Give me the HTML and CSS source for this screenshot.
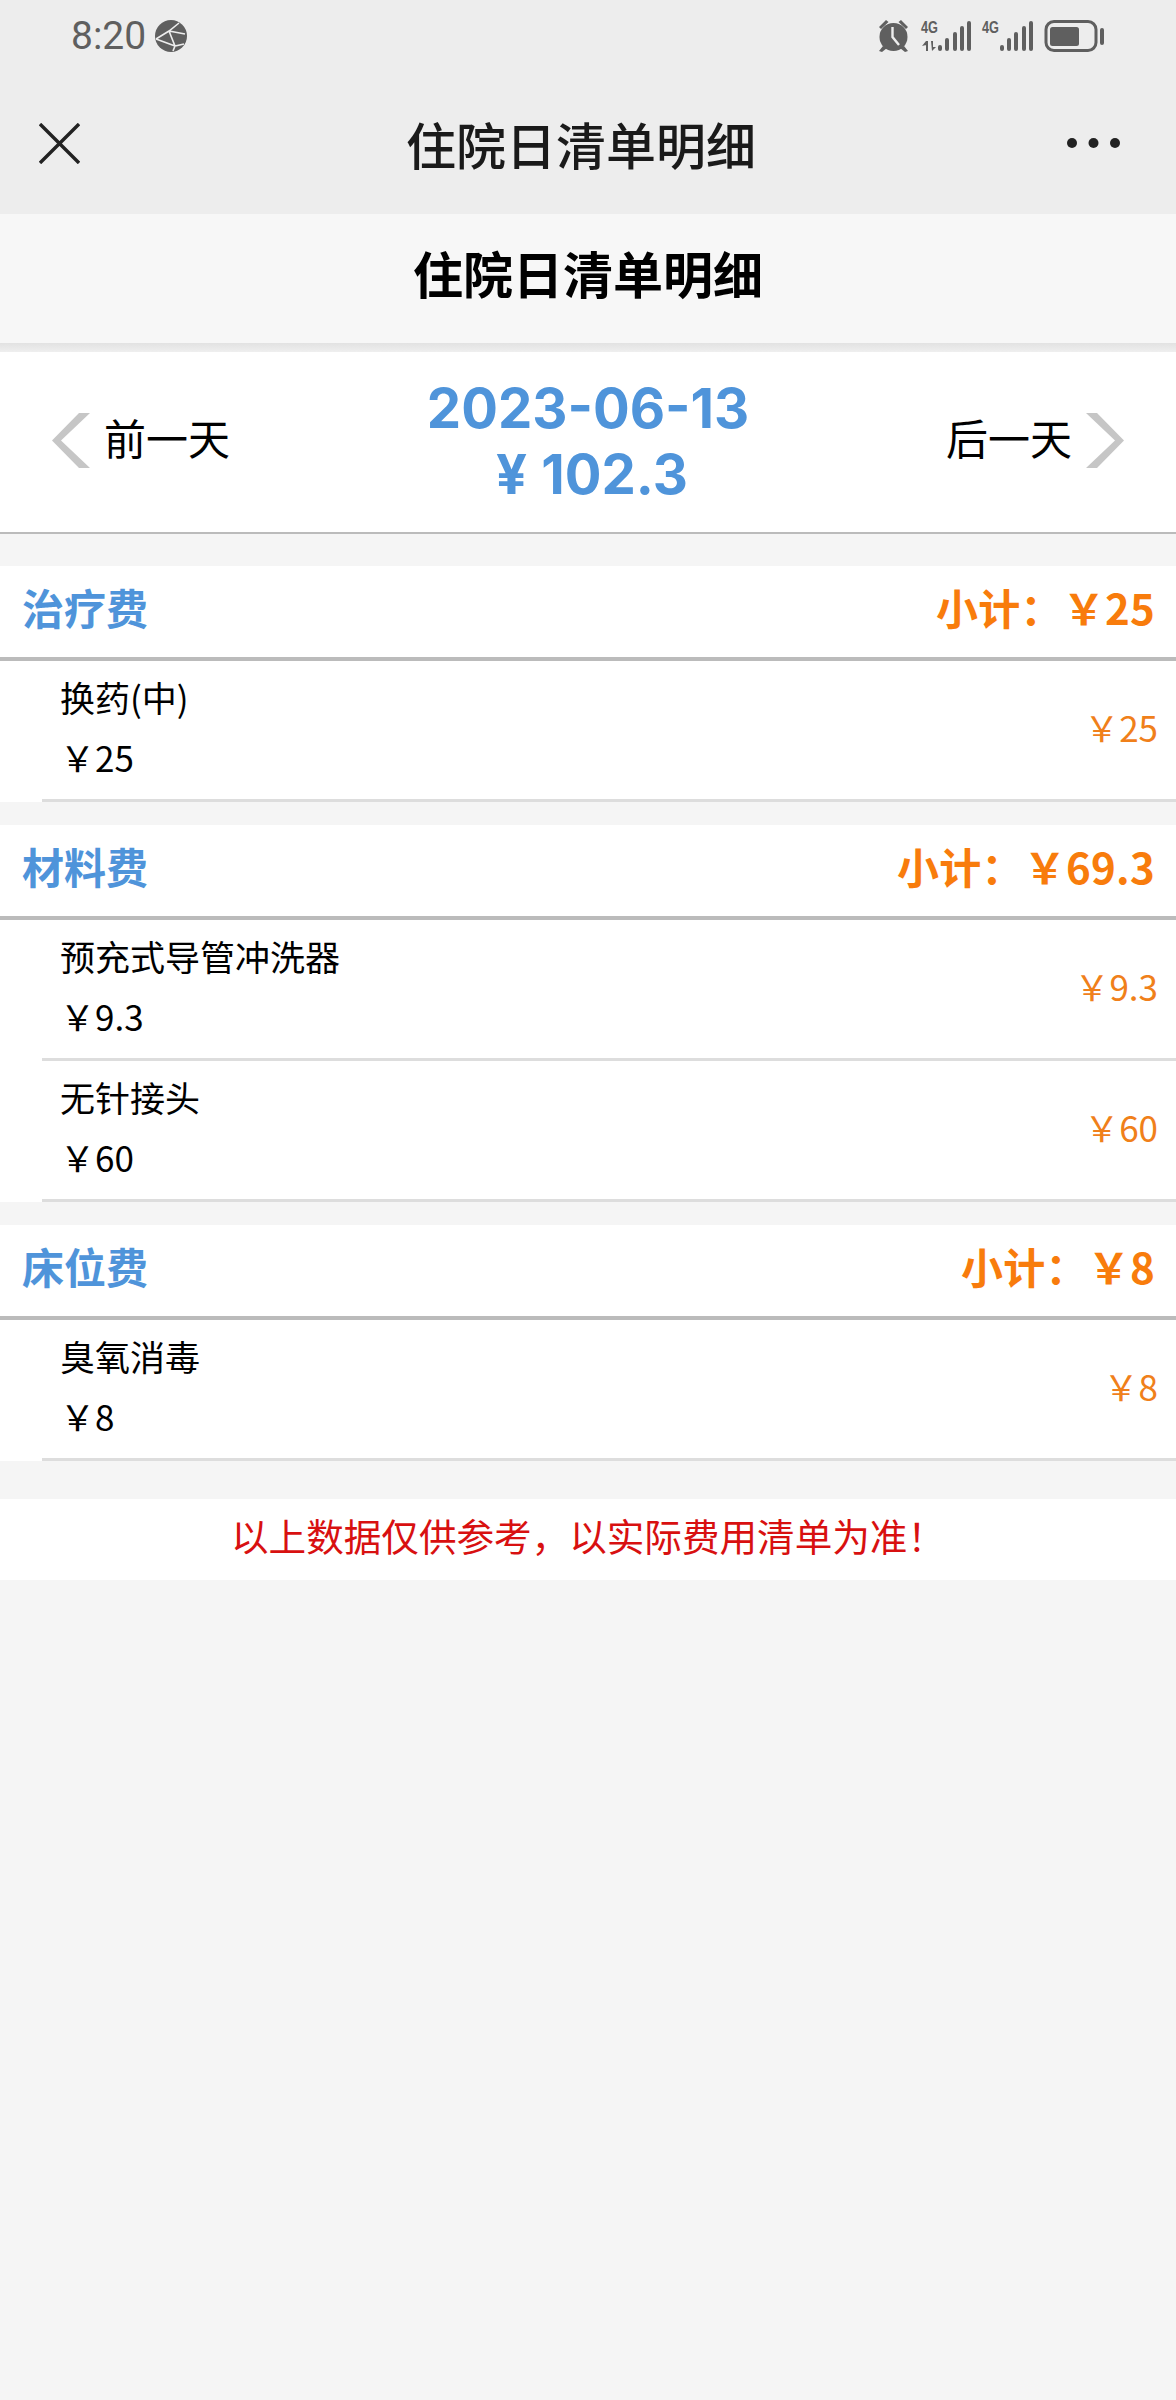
FILE: index.html
```html
<!DOCTYPE html>
<html lang="zh-CN">
<head>
<meta charset="utf-8">
<title>住院日清单明细</title>
<link rel="stylesheet" href="styles.css">
</head>
<body>
<header class="chrome">
  <div class="status">
    <div class="status-left">
      <span class="clock">8:20</span>
      <svg class="globe" width="32" height="32" viewBox="0 0 32 32"><circle cx="16" cy="16" r="16" fill="#5f5f5f"/><path d="M1 19 L14 11 L24 3 M14 11 L30 14 M14 11 L20 26 L29 24 M1 19 L20 26 L18 31" fill="none" stroke="#ededed" stroke-width="1.6"/></svg>
    </div>
    <svg class="status-right" width="234" height="40" viewBox="-2 0 234 40">
      <g fill="#5f5f5f">
        <circle cx="15.500" cy="19" r="14"/>
        <path d="M1 9 L8 2 L10.500 4 L3 11Z M30 9 L23 2 L20.500 4 L28 11Z M5 28 L1 33 L4 34 L9 30Z M26 28 L30 33 L27 34 L22 30Z"/>
      </g>
      <path d="M14.500 9 L14.500 19 L21 27" fill="none" stroke="#ededed" stroke-width="2.400"/>
      <text class="net" x="43" y="15" textLength="17" lengthAdjust="spacingAndGlyphs">4G</text>
      <g fill="#5f5f5f">
        <path d="M48 23 h2 v10 h-2z M44 28 l4-5 v4z M53 23 h2 v6 l3 0 l-4 4z"/>
        <rect x="60" y="27" width="4" height="6" rx="2"/>
        <rect x="67" y="20" width="4" height="13" rx="2"/>
        <rect x="75" y="14" width="4" height="19" rx="2"/>
        <rect x="82" y="8" width="4" height="25" rx="2"/>
        <rect x="89" y="3" width="4" height="30" rx="2"/>
      </g>
      <text class="net" x="104" y="15" textLength="17" lengthAdjust="spacingAndGlyphs">4G</text>
      <g fill="#5f5f5f">
        <rect x="122" y="27" width="4" height="6" rx="2"/>
        <rect x="129" y="20" width="4" height="13" rx="2"/>
        <rect x="136" y="14" width="4" height="19" rx="2"/>
        <rect x="144" y="8" width="4" height="25" rx="2"/>
        <rect x="151" y="3" width="4" height="30" rx="2"/>
      </g>
      <rect x="168" y="3.500" width="50" height="29" rx="8" fill="none" stroke="#5f5f5f" stroke-width="3"/>
      <rect x="172" y="9" width="29" height="19" rx="2.500" fill="#5f5f5f"/>
      <rect x="222" y="10" width="4" height="17" rx="2" fill="#5f5f5f"/>
    </svg>
  </div>
  <nav class="nav">
    <svg class="close" width="41" height="41" viewBox="0 0 41 41"><path d="M1 1 L40 40 M40 1 L1 40" stroke="#222" stroke-width="3.400" fill="none"/></svg>
    <div class="nav-title">住院日清单明细</div>
    <svg class="more" width="53" height="10" viewBox="0 0 53 10"><circle cx="5" cy="5" r="5"/><circle cx="26.500" cy="5" r="5"/><circle cx="48" cy="5" r="5"/></svg>
  </nav>
</header>

<div class="page-title">住院日清单明细</div>
<div class="title-shadow"></div>

<section class="day">
  <div class="day-link">
    <svg class="chev" width="38" height="55" viewBox="0 0 38 55"><path d="M27 0 H38 L9 27.500 L38 55 H27 L0 27.500Z"/></svg>
    <span>前一天</span>
  </div>
  <div class="day-center">
    <div>2023-06-13</div>
    <div class="day-amount"><span class="day-yen">¥</span>102.3</div>
  </div>
  <div class="day-link">
    <span>后一天</span>
    <svg class="chev" width="38" height="55" viewBox="0 0 38 55"><path d="M11 0 H0 L29 27.500 L0 55 H11 L38 27.500Z"/></svg>
  </div>
</section>

<section class="group">
  <div class="group-head"><span class="group-name">治疗费</span><span class="group-sum">小计：￥25</span></div>
  <div class="row"><div class="row-inner">
    <div><div class="item-name">换药(中)</div><div class="item-unit">￥25</div></div>
    <div class="item-price">￥25</div>
  </div></div>
</section>

<section class="group">
  <div class="group-head"><span class="group-name">材料费</span><span class="group-sum">小计：￥69.3</span></div>
  <div class="row"><div class="row-inner">
    <div><div class="item-name">预充式导管冲洗器</div><div class="item-unit">￥9.3</div></div>
    <div class="item-price">￥9.3</div>
  </div></div>
  <div class="row"><div class="row-inner">
    <div><div class="item-name">无针接头</div><div class="item-unit">￥60</div></div>
    <div class="item-price">￥60</div>
  </div></div>
</section>

<section class="group">
  <div class="group-head"><span class="group-name">床位费</span><span class="group-sum">小计：￥8</span></div>
  <div class="row"><div class="row-inner">
    <div><div class="item-name">臭氧消毒</div><div class="item-unit">￥8</div></div>
    <div class="item-price">￥8</div>
  </div></div>
</section>

<div class="notice">以上数据仅供参考，以实际费用清单为准！</div>
</body>
</html>
```
FILE: styles.css
```css
* { box-sizing: border-box; }
html, body { margin: 0; padding: 0; }
body {
  background: #f5f5f5;
  color: #000;
  font-family: "Noto Sans CJK SC", "Noto Sans", sans-serif;
  min-height: 2400px;
}
.chrome { background: #ededed; height: 214px; }
.status {
  height: 60px;
  padding: 16px 66px 0 71px;
  display: flex;
  justify-content: space-between;
  align-items: flex-start;
}
.status-left { display: flex; align-items: center; gap: 9px; }
.clock {
  font-family: Roboto, sans-serif;
  font-size: 39px;
  line-height: 40px;
  color: #5f5f5f;
}
.status-right { margin-top: 2px; }
.net { font-family: "Liberation Sans", sans-serif; font-size: 16px; font-weight: 700; fill: #5f5f5f; }
.nav {
  height: 154px;
  padding: 12px 56px 0 39px;
  display: grid;
  grid-template-columns: 41px 1fr 53px;
  align-items: center;
}
.close { display: block; }
.more { display: block; fill: #222; }
.nav-title {
  text-align: center;
  font-size: 50px;
  font-weight: 500;
  line-height: 60px;
  color: #1a1a1a;
  padding-left: 15px;
}
.page-title {
  height: 129px;
  background: #f7f7f7;
  text-align: center;
  font-size: 50px;
  font-weight: 700;
  line-height: 117px;
}
.title-shadow {
  height: 9px;
  background: linear-gradient(#e2e2e2, #efefef);
}
.day {
  height: 182px;
  background: #fff;
  border-bottom: 2px solid #bbb;
  margin-bottom: 32px;
  padding: 0 52px;
  display: grid;
  grid-template-columns: 1fr auto 1fr;
  align-items: center;
}
.day-link {
  display: flex;
  align-items: center;
  gap: 14px;
  font-size: 42px;
  line-height: 56px;
  margin-top: -10px;
}
.day-link:last-child { justify-content: flex-end; }
.chev { fill: #c6c6c6; flex: none; margin-top: 6px; }
.day-center {
  text-align: center;
  font-family: Inter, Roboto, sans-serif;
  font-size: 54.500px;
  font-weight: 700;
  line-height: 66px;
  color: #4f94da;
  margin-top: -2px;
}
.day-amount { padding-left: 8px; }
.day-yen { margin-right: 14px; }
.group { margin-bottom: 23px; }
.group:last-of-type { margin-bottom: 38px; }
.group-head {
  height: 95px;
  background: #fff;
  border-bottom: 4px solid #bbb;
  padding: 0 21px 10px 22px;
  display: flex;
  justify-content: space-between;
  align-items: center;
  font-size: 42px;
  font-weight: 700;
  line-height: 70px;
}
.group-name { color: #4f94da; }
.group-sum { color: #f87c0c; letter-spacing: 0.250px; }
.row { background: #fff; padding-left: 42px; }
.row-inner {
  height: 141px;
  border-bottom: 3px solid #ddd;
  padding: 6px 18px 12px 18px;
  display: flex;
  justify-content: space-between;
  align-items: center;
  font-size: 35px;
  line-height: 60px;
}
.item-price { color: #f0801a; }
.notice {
  height: 81px;
  background: #fff;
  text-align: center;
  color: #d81010;
  font-size: 37.600px;
  line-height: 71px;
}
```
